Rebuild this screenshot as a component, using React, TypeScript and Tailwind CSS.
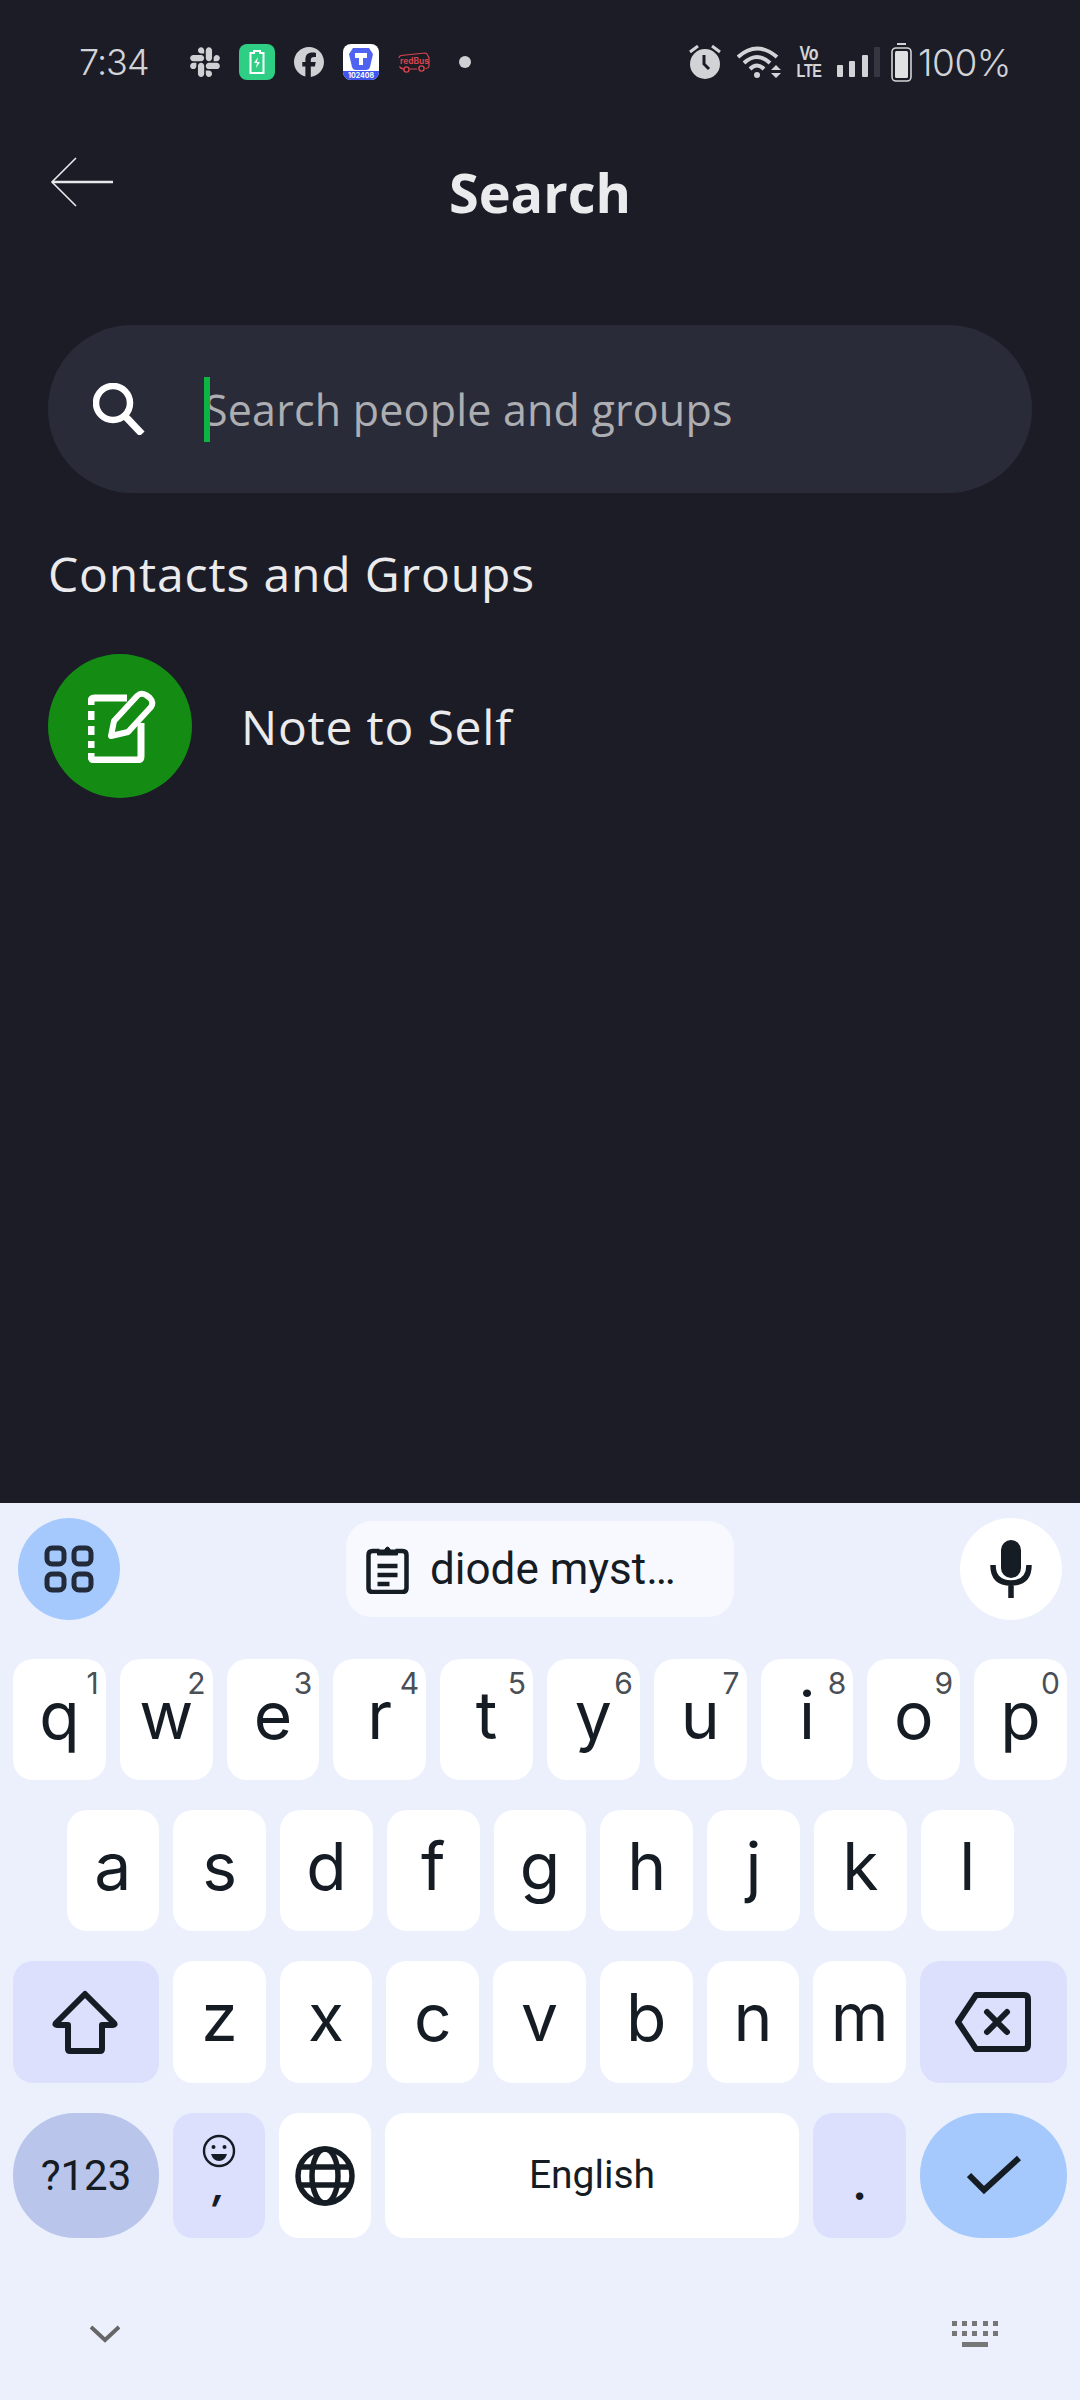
import { FaFacebook, FaSlack } from 'react-icons/fa6';

const row1 = [
  ['q', '1'],
  ['w', '2'],
  ['e', '3'],
  ['r', '4'],
  ['t', '5'],
  ['y', '6'],
  ['u', '7'],
  ['i', '8'],
  ['o', '9'],
  ['p', '0'],
];
const row2 = ['a', 's', 'd', 'f', 'g', 'h', 'j', 'k', 'l'];
const row3 = ['z', 'x', 'c', 'v', 'b', 'n', 'm'];

function Key({ label, hint }: { label: string; hint?: string }) {
  return (
    <div className="relative flex h-full flex-1 items-center justify-center rounded-[20px] bg-white pb-[10px] text-[66px] leading-none text-[#151c24]">
      {label}
      {hint && (
        <span className="absolute top-[9px] right-[7px] text-[30px] leading-[30px] text-[#4a4f56]">{hint}</span>
      )}
    </div>
  );
}

function StatusIcons() {
  return (
    <div className="flex items-center">
      <FaSlack className="ml-[30px] h-[34px] w-[34px] text-[#cfd0d3]" />
      <div className="ml-[17px] flex h-[36px] w-[36px] items-center justify-center rounded-[8px] bg-[#2ecf85]">
        <svg width="16" height="24" viewBox="0 0 16 24" fill="none">
          <path d="M5 1h6v2h3.500v20h-13V3H5z" stroke="#fff" strokeWidth="2" />
          <path d="M9 7l-4 6h3l-1 5 4-6H8z" fill="#fff" />
        </svg>
      </div>
      <FaFacebook className="ml-[19px] h-[30px] w-[30px] text-[#cfd0d3]" />
      <div className="relative ml-[19px] h-[36px] w-[36px] overflow-hidden rounded-[8px] bg-white">
        <svg className="absolute top-[3px] left-[5px]" width="26" height="24" viewBox="0 0 26 24">
          <path d="M5 1h16l4 6-3 13q-1 3-4 3H8q-3 0-4-3L1 7z" fill="#4f63f0" />
          <path d="M7 6h12v5h-4v7h-4v-7H7z" fill="#fff" />
        </svg>
        <div className="absolute right-0 bottom-0 left-0 flex h-[9px] items-center justify-center bg-[#3f55ee] text-[7px] leading-none font-bold text-white">
          102408
        </div>
      </div>
      <svg className="ml-[19px]" width="32" height="22" viewBox="0 0 32 22" fill="none" stroke="#d8444d">
        <path d="M1 7q0-2 2-2.500L27 2q2 0 2.500 2L31 7v8q0 1.500-1.500 2l-2 .5M19 18h-7M5 18q-2.500 0-3-2z" strokeWidth="1.200" />
        <circle cx="8.500" cy="18.500" r="2.600" strokeWidth="1.400" />
        <circle cx="23.500" cy="17.500" r="2.600" strokeWidth="1.400" />
        <text x="2" y="12.500" fontSize="8.400" fontWeight="700" fill="#d8444d" stroke="none" fontFamily="Inter, sans-serif">
          redBus
        </text>
      </svg>
      <div className="ml-[29px] h-[12px] w-[12px] rounded-full bg-[#cfd0d3]" />
    </div>
  );
}

function SystemIcons() {
  return (
    <div className="flex items-center">
      <svg width="32" height="34" viewBox="0 0 32 34">
        <circle cx="16" cy="19" r="15" fill="#d2d3d6" />
        <path d="M15 10v9l5 5" fill="none" stroke="#1b1c26" strokeWidth="3" />
        <path d="M1 7l8-6M31 7l-8-6" stroke="#d2d3d6" strokeWidth="3" />
      </svg>
      <svg className="ml-[16px]" width="44" height="34" viewBox="0 0 44 34" fill="none" stroke="#d2d3d6">
        <path d="M1 12Q20-5 40 12" strokeWidth="4" />
        <path d="M7 18Q20 6 33 18" strokeWidth="4" />
        <path d="M13 24Q20 17 27 24" strokeWidth="4" />
        <circle cx="20" cy="30" r="3" fill="#d2d3d6" stroke="none" />
        <path d="M34 25l5-5 5 5zM34 28h10l-5 5z" fill="#d2d3d6" stroke="none" />
      </svg>
      <svg className="ml-[17px] overflow-visible" width="22" height="30" viewBox="0 0 22 30" fill="#d2d3d6" fontFamily="Liberation Sans, sans-serif" fontWeight="700" textAnchor="middle">
        <text transform="translate(11 13) scale(1 1.250)" fontSize="16">
          Vo
        </text>
        <text transform="translate(11 30) scale(1 1.300)" fontSize="14.500" letterSpacing="-0.5">
          LTE
        </text>
      </svg>
      <div className="ml-[17px] flex h-[30px] w-[43px] items-end justify-between">
        <div className="h-[12px] w-[6px] rounded-[1px] bg-[#d2d3d6]" />
        <div className="h-[16px] w-[6px] rounded-[1px] bg-[#d2d3d6]" />
        <div className="h-[22px] w-[6px] rounded-[1px] bg-[#d2d3d6]" />
        <div className="h-[30px] w-[6px] rounded-[1px] bg-[#35363f]" />
      </div>
      <svg className="ml-[11px]" width="21" height="39" viewBox="0 0 21 39" fill="none">
        <path d="M6 1h9" stroke="#d2d3d6" strokeWidth="2" />
        <rect x="1" y="5" width="19" height="33" rx="4" stroke="#d2d3d6" strokeWidth="1.600" />
        <rect x="4" y="8" width="13" height="27" rx="1.500" fill="#e0e1e3" />
      </svg>
      <span className="ml-[6px] w-[89px] text-[37px] leading-none font-light tracking-[-0.5px] text-[#d2d3d6]">
        100%
      </span>
    </div>
  );
}

export default function App() {
  return (
    <div className="flex h-[2400px] w-[1080px] flex-col overflow-hidden bg-[#1b1c26] font-['Inter',sans-serif]">
      {/* status bar */}
      <div className="flex h-[124px] shrink-0 items-center justify-between pr-[73px] pl-[79px]">
        <div className="flex items-center">
          <span className="w-[79px] text-[36px] leading-none font-light tracking-[-1px] text-[#d2d3d6]">7:34</span>
          <StatusIcons />
        </div>
        <SystemIcons />
      </div>

      {/* app content */}
      <div className="flex-1 px-[48px] font-['Open_Sans',sans-serif]">
        <div className="grid h-[138px] grid-cols-[1fr_auto_1fr] items-center">
          <svg className="mb-[22px] ml-[2px]" width="64" height="50" viewBox="0 0 64 50" fill="none" stroke="#e8e8ea">
            <path d="M63 25H2" strokeWidth="2.400" />
            <path d="M26 1L2 25l24 24" strokeWidth="1.600" />
          </svg>
          <h1 className="mb-[2px] text-[54px] leading-none font-bold text-[#ebebed]">Search</h1>
          <div />
        </div>

        <div className="mt-[63px] flex h-[168px] w-[984px] items-center rounded-full bg-[#2a2b38] pl-[45px]">
          <svg width="52" height="52" viewBox="0 0 52 52" fill="none" stroke="#fff">
            <circle cx="20" cy="20" r="17" strokeWidth="6.500" />
            <path d="M32 33l17 18" strokeWidth="7" />
          </svg>
          <div className="relative ml-[59px] flex h-[65px] items-center pt-[2px] text-[43px] tracking-[0.2px] text-[#adaeb2]">
            <div className="absolute top-0 left-0 h-[65px] w-[6px] bg-[#0cb542]" />
            Search people and groups
          </div>
        </div>

        <div className="mt-[51px] text-[48px] leading-[60px] tracking-[0.85px] text-[#ebebed]">
          Contacts and Groups
        </div>

        <div className="mt-[50px] flex items-center">
          <div className="flex h-[144px] w-[144px] items-center justify-center rounded-full bg-[#148c14]">
            <svg className="ml-[3px]" width="68" height="73" viewBox="0 0 68 73" fill="none" stroke="#fff">
              <path
                d="M39 8H7Q3 8 3 12v3M3 21v9M3 36v9M3 51v7M3 63v3q0 4 4 4h42q4 0 4-4V33"
                strokeWidth="7"
              />
              <path
                d="M23 46l3-15L49 6q4-4 9-1l4 3q4 4 1 9L40 42z"
                strokeWidth="6"
                strokeLinejoin="round"
              />
            </svg>
          </div>
          <span className="mt-[2px] ml-[49px] text-[48px] leading-none tracking-[0.8px] text-[#ebebed]">Note to Self</span>
        </div>
      </div>

      {/* keyboard */}
      <div className="h-[897px] shrink-0 bg-[#ecf0fd] pt-[15px]">
        <div className="flex h-[102px] items-center justify-between pr-[18px] pl-[18px]">
          <div className="flex h-[102px] w-[102px] items-center justify-center rounded-full bg-[#a5c9fd]">
            <svg width="50" height="48" viewBox="0 0 50 48" fill="none" stroke="#232b3a" strokeWidth="5">
              <rect x="3" y="3" width="17" height="16" rx="5" />
              <rect x="30" y="3" width="17" height="16" rx="5" />
              <rect x="3" y="29" width="17" height="16" rx="5" />
              <rect x="30" y="29" width="17" height="16" rx="5" />
            </svg>
          </div>
          <div className="flex h-[96px] w-[388px] items-center rounded-[26px] bg-[#f8f9ff] pl-[20px] font-['Roboto',sans-serif] text-[44px] leading-none text-[#151c24]">
            <svg width="43" height="50" viewBox="0 0 42 50" fill="none" stroke="#151c24">
              <path d="M13 7H6Q2 7 2 11v33q0 4 4 4h30q4 0 4-4V11q0-4-4-4h-7" strokeWidth="4.500" />
              <path d="M11 11V6h7q3-6 6 0h7v5z" fill="#151c24" strokeWidth="1" />
              <path d="M11 22h20M11 31h20M11 40h12" strokeWidth="4.500" />
            </svg>
            <span className="ml-[21px]">diode myst…</span>
          </div>
          <div className="flex h-[102px] w-[102px] items-center justify-center rounded-full bg-white">
            <svg width="42" height="58" viewBox="0 0 42 58" fill="none">
              <rect x="11" y="0" width="20" height="38" rx="10" fill="#151c24" />
              <path d="M3 25q0 18 18 18t18-18M21 43v15" stroke="#151c24" strokeWidth="5.500" />
            </svg>
          </div>
        </div>

        <div className="mt-[39px] flex flex-col gap-[30px] px-[13px]">
          <div className="flex h-[121px] gap-[14px]">
            {row1.map(([k, n]) => (
              <Key key={k} label={k} hint={n} />
            ))}
          </div>
          <div className="flex h-[121px] gap-[14px] px-[53.5px]">
            {row2.map((k) => (
              <Key key={k} label={k} />
            ))}
          </div>
          <div className="flex h-[122px] gap-[14px]">
            <div className="flex h-full w-[146px] shrink-0 items-center justify-center rounded-[20px] bg-[#dce0fd]">
              <svg className="mr-[2px]" width="68" height="64" viewBox="0 0 68 64" fill="none" stroke="#151c24" strokeWidth="6" strokeLinejoin="round">
                <path d="M34 4L63 33q1.500 2-1 2H51v24q0 2-2 2H19q-2 0-2-2V35H6q-2.500 0-1-2z" />
              </svg>
            </div>
            {row3.map((k) => (
              <Key key={k} label={k} />
            ))}
            <div className="flex h-full w-[147px] shrink-0 items-center justify-center rounded-[20px] bg-[#dce0fd]">
              <svg className="mr-[2px]" width="76" height="60" viewBox="0 0 76 60" fill="none" stroke="#151c24" strokeWidth="6" strokeLinejoin="round">
                <path d="M3 30L21 3h48q4 0 4 4v46q0 4-4 4H21z" />
                <path d="M32 20l20 20M52 20L32 40" strokeLinecap="round" />
              </svg>
            </div>
          </div>
          <div className="flex h-[125px] gap-[14px]">
            <div className="flex h-full w-[146px] shrink-0 items-center justify-center rounded-[62px] bg-[#b9c5ea] font-['Roboto',sans-serif] text-[42px] leading-none text-[#151c24]">
              ?123
            </div>
            <div className="relative flex h-full w-[92px] shrink-0 flex-col items-center rounded-[20px] bg-[#dce0fd] pt-[21px] text-[#151c24]">
              <svg width="34" height="34" viewBox="0 0 34 34" fill="none" stroke="#151c24" strokeWidth="2.400">
                <circle cx="17" cy="17" r="15" />
                <circle cx="11.500" cy="13" r="2" fill="#151c24" stroke="none" />
                <circle cx="22.500" cy="13" r="2" fill="#151c24" stroke="none" />
                <path d="M9 20h16q-2 7-8 7t-8-7z" fill="#151c24" stroke="none" />
              </svg>
              <span className="mt-[-2px] text-[38px] leading-none font-bold italic">,</span>
            </div>
            <div className="flex h-full w-[92px] shrink-0 items-center justify-center rounded-[20px] bg-white">
              <svg width="60" height="60" viewBox="0 0 60 60" fill="none" stroke="#151c24" strokeWidth="5.500">
                <circle cx="30" cy="30" r="27" />
                <ellipse cx="30" cy="30" rx="13" ry="27" />
                <path d="M4 21h52M4 39h52" />
              </svg>
            </div>
            <div className="flex h-full flex-1 items-center justify-center rounded-[20px] bg-white font-['Roboto',sans-serif] text-[39px] leading-none text-[#151c24]">
              English
            </div>
            <div className="flex h-full w-[93px] shrink-0 items-start justify-center rounded-[20px] bg-[#dce0fd] pt-[49px] text-[44px] leading-none font-bold text-[#151c24]">
              .
            </div>
            <div className="flex h-full w-[147px] shrink-0 items-center justify-center rounded-[62px] bg-[#a5c9fd]">
              <svg width="54" height="41" viewBox="0 0 54 41" fill="none" stroke="#151c24" strokeWidth="6">
                <path d="M2 20l15 15L52 3" />
              </svg>
            </div>
          </div>
        </div>

        {/* nav hints */}
        <div className="mt-[80px] flex h-[32px] items-center justify-between pr-[82px] pl-[90px]">
          <svg width="30" height="18" viewBox="0 0 30 18" fill="none" stroke="#666" strokeWidth="4">
            <path d="M1 2l14 13L29 2" />
          </svg>
          <svg width="46" height="27" viewBox="0 0 46 27" fill="#777">
            <path d="M0 0h5v5H0zM10 0h5v5h-5zM20 0h5v5h-5zM31 0h5v5h-5zM41 0h5v5h-5zM0 10h5v5H0zM10 10h5v5h-5zM20 10h5v5h-5zM31 10h5v5h-5zM41 10h5v5h-5zM10 21h26v5H10z" />
          </svg>
        </div>
      </div>
    </div>
  );
}
